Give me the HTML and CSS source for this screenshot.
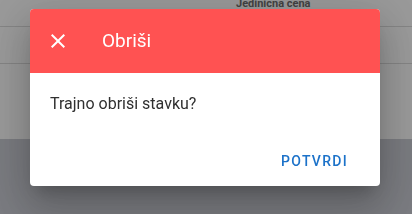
FILE: index.html
```html
<!DOCTYPE html>
<html lang="sr">
<head>
<meta charset="utf-8">
<link rel="stylesheet" href="styles.css">
</head>
<body>
<div class="page">
  <div class="table">
    <div class="thead">
      <div class="th th-spacer"></div>
      <div class="th">Jedinicna cena</div>
    </div>
    <div class="trow"></div>
    <div class="trest"></div>
  </div>
</div>
<div class="backdrop">
  <div class="dialog">
    <div class="dialog-header">
      <svg class="close-icon" viewBox="0 0 24 24" width="24" height="24"><path d="M19 6.41 17.59 5 12 10.59 6.41 5 5 6.41 10.59 12 5 17.59 6.41 19 12 13.41 17.59 19 19 17.59 13.41 12z" fill="#fff"/></svg>
      <div class="dialog-title">Obriši</div>
    </div>
    <div class="dialog-content">Trajno obriši stavku?</div>
    <div class="dialog-actions">
      <button class="btn">POTVRDI</button>
    </div>
  </div>
</div>
</body>
</html>
```

FILE: styles.css
```css
html, body {
  margin: 0;
  padding: 0;
  height: 100%;
}
body {
  background: #cbcdd5;
  font-family: Roboto, "Liberation Sans", sans-serif;
  overflow: hidden;
}
.table {
  background: #fff;
  height: 139px;
  display: flex;
  flex-direction: column;
}
.thead {
  display: grid;
  grid-template-columns: 236px 1fr;
  height: 30px;
  margin-top: -3px;
  border-bottom: 1px solid #dcdcdc;
  box-sizing: border-box;
}
.th {
  font-size: 11px;
  line-height: 13px;
  font-weight: 700;
  color: #6e6e6e;
}
.trow {
  height: 37px;
  border-bottom: 1px solid #dcdcdc;
  box-sizing: border-box;
}
.trest {
  flex: 1;
}
.backdrop {
  position: fixed;
  inset: 0;
  background: rgba(0, 0, 0, 0.4);
  display: flex;
  align-items: flex-start;
  padding: 9px 32px 0 30px;
}
.dialog {
  flex: 1;
  background: #fff;
  border-radius: 4px;
  overflow: hidden;
  box-shadow: 0px 11px 15px -7px rgba(0,0,0,0.2), 0px 24px 38px 3px rgba(0,0,0,0.14), 0px 9px 46px 8px rgba(0,0,0,0.12);
}
.dialog-header {
  height: 64px;
  background: #ff5252;
  display: flex;
  align-items: center;
  padding-left: 16px;
  gap: 32px;
}
.close-icon {
  display: block;
  flex: none;
}
.dialog-title {
  color: #fff;
  font-size: 19px;
  line-height: 32px;
  font-weight: 400;
}
.dialog-content {
  padding: 19px 20px 0;
  font-size: 16px;
  line-height: 24px;
  color: #303030;
}
.dialog-actions {
  display: flex;
  justify-content: flex-end;
  padding: 27px 25px 7px;
}
.btn {
  border: 0;
  background: transparent;
  font-family: Roboto, "Liberation Sans", sans-serif;
  font-size: 14px;
  font-weight: 500;
  letter-spacing: 1.3px;
  color: #1c72c9;
  line-height: 36px;
  height: 36px;
  padding: 0 7px 0 8px;
  cursor: pointer;
}
```
